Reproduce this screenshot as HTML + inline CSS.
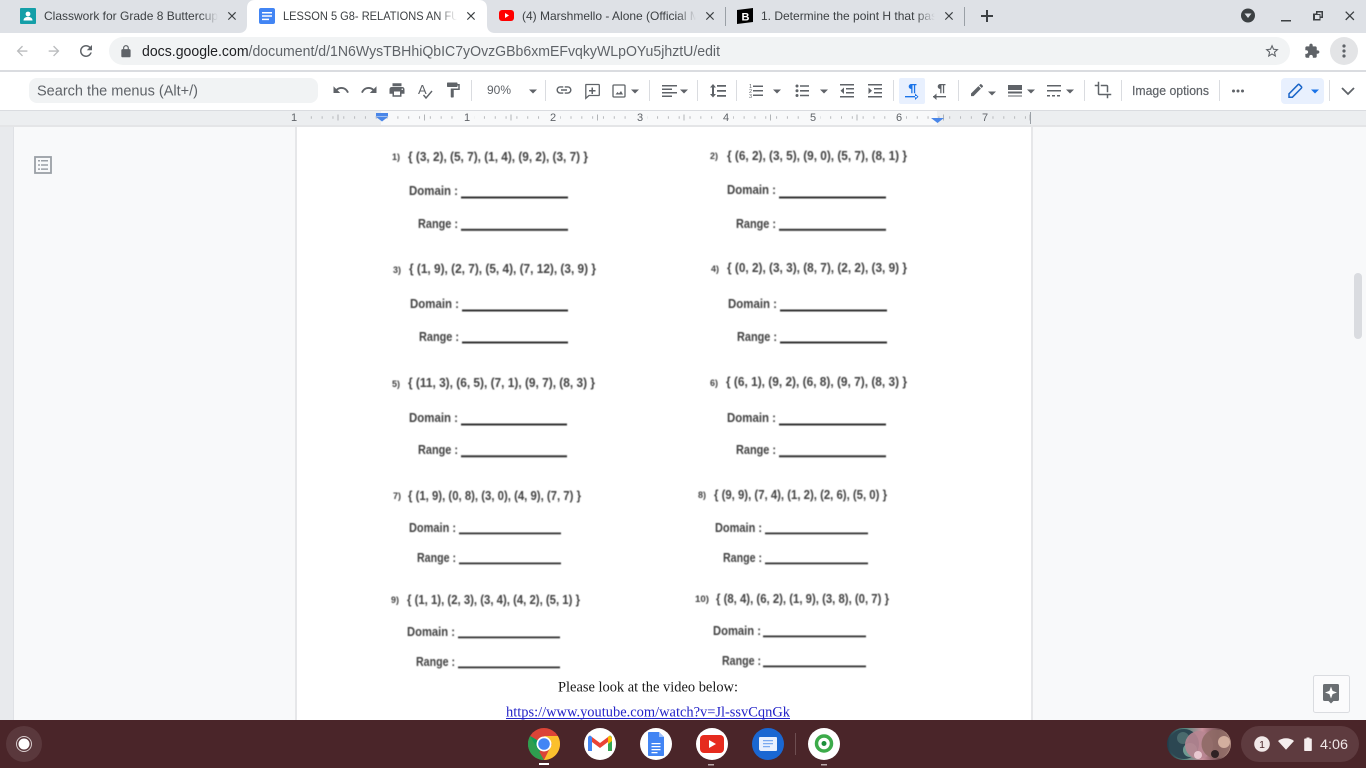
<!DOCTYPE html>
<html lang="en">
<head>
<meta charset="utf-8">
<title>LESSON 5 G8- RELATIONS AN FUNCTIONS</title>
<style>
html,body{margin:0;padding:0;width:1366px;height:768px;overflow:hidden;background:#fff}
svg{display:block;position:absolute;left:0;top:0}
text{font-family:"Liberation Sans",sans-serif}
.tab{font-size:12px}
.s{font-size:12.5px;font-weight:700;fill:#404040}
.l{font-size:9px;font-weight:700;fill:#404040}
.d{font-size:13px;font-weight:700;fill:#404040}
.u{fill:#333}
.r{font-size:11px;fill:#5f6368;text-anchor:middle}
.i{fill:#5f6368}
.sep{stroke:#dadce0;stroke-width:1}
</style>
</head>
<body>
<svg width="1366" height="768" viewBox="0 0 1366 768" xmlns="http://www.w3.org/2000/svg">
<defs>
<filter id="b" x="-5%" y="-5%" width="110%" height="110%"><feGaussianBlur stdDeviation="0.45"/></filter>
<linearGradient id="f1" gradientUnits="userSpaceOnUse" x1="200" x2="218" y1="0" y2="0"><stop offset="0" stop-color="#3c4043"/><stop offset="1" stop-color="#3c4043" stop-opacity="0"/></linearGradient>
<linearGradient id="f2" gradientUnits="userSpaceOnUse" x1="438" x2="457" y1="0" y2="0"><stop offset="0" stop-color="#3c4043"/><stop offset="1" stop-color="#3c4043" stop-opacity="0"/></linearGradient>
<linearGradient id="f3" gradientUnits="userSpaceOnUse" x1="677" x2="696" y1="0" y2="0"><stop offset="0" stop-color="#3c4043"/><stop offset="1" stop-color="#3c4043" stop-opacity="0"/></linearGradient>
<linearGradient id="f4" gradientUnits="userSpaceOnUse" x1="916" x2="935" y1="0" y2="0"><stop offset="0" stop-color="#3c4043"/><stop offset="1" stop-color="#3c4043" stop-opacity="0"/></linearGradient>
<linearGradient id="av" x1="0" x2="1" y1="0" y2="0"><stop offset="0" stop-color="#1f3b4a"/><stop offset=".3" stop-color="#5b8a80"/><stop offset=".55" stop-color="#c9909c"/><stop offset=".8" stop-color="#6d4a4e"/><stop offset="1" stop-color="#c9a596"/></linearGradient>
<clipPath id="pg"><rect x="297" y="125" width="734" height="595"/></clipPath>
</defs>

<!-- backgrounds -->
<rect width="1366" height="768" fill="#f8f9fa"/>
<rect x="0" y="125" width="13" height="595" fill="#e8eaed"/>
<rect x="13" y="125" width="1" height="595" fill="#dfe1e5"/>
<rect x="297" y="125" width="734" height="595" fill="#fff"/>
<rect x="295" y="125" width="2" height="595" fill="#e6e7e9"/>
<rect x="1031" y="125" width="2" height="595" fill="#e6e7e9"/>

<!-- tab strip -->
<rect width="1366" height="33" fill="#dee1e6"/>
<path d="M239 33c5 0 8-3 8-8V8c0-5 3-8 8-8h224c5 0 8 3 8 8v17c0 5 3 8 8 8z" fill="#fff"/>
<rect x="725" y="7" width="1" height="19" fill="#9aa0a6"/>
<rect x="964" y="7" width="1" height="19" fill="#9aa0a6"/>

<!-- tab 1 -->
<rect x="20" y="8" width="16" height="16" rx="1" fill="#149fa8"/>
<circle cx="28" cy="14" r="2.4" fill="#fff"/><path d="M23.5 20.5c0-2.4 2.2-3.6 4.5-3.6s4.500 1.200 4.500 3.600z" fill="#fff"/>
<text x="44" y="20" class="tab" fill="url(#f1)">Classwork for Grade 8 Buttercup Section</text>
<path transform="translate(225 9) scale(.58)" d="M19 6.410L17.590 5 12 10.590 6.410 5 5 6.410 10.590 12 5 17.590 6.410 19 12 13.410 17.590 19 19 17.590 13.410 12z" fill="#3c4043"/>
<!-- tab 2 -->
<rect x="259" y="8" width="16" height="16" rx="2" fill="#4285f4"/>
<path d="M262 12h10v1.500h-10zM262 15.300h10v1.500h-10zM262 18.600h7v1.500h-7z" fill="#fff"/>
<text x="283" y="20" class="tab" fill="url(#f2)" textLength="226" lengthAdjust="spacingAndGlyphs">LESSON 5 G8- RELATIONS AN FUNCTIONS</text>
<path transform="translate(464 9) scale(.58)" d="M19 6.410L17.590 5 12 10.590 6.410 5 5 6.410 10.590 12 5 17.590 6.410 19 12 13.410 17.590 19 19 17.590 13.410 12z" fill="#3c4043"/>
<!-- tab 3 -->
<rect x="499" y="10" width="15" height="11" rx="3" fill="#f00"/><path d="M505 13v5l4-2.500z" fill="#fff"/>
<text x="522" y="20" class="tab" fill="url(#f3)">(4) Marshmello - Alone (Official Music Video)</text>
<path transform="translate(703 9) scale(.58)" d="M19 6.410L17.590 5 12 10.590 6.410 5 5 6.410 10.590 12 5 17.590 6.410 19 12 13.410 17.590 19 19 17.590 13.410 12z" fill="#3c4043"/>
<!-- tab 4 -->
<path d="M737 10l16-2v14l-16 2z" fill="#000"/>
<text x="741.500" y="20.500" font-size="11" font-weight="700" fill="#fff">B</text>
<text x="761" y="20" class="tab" fill="url(#f4)">1. Determine the point H that passes through</text>
<path transform="translate(942 9) scale(.58)" d="M19 6.410L17.590 5 12 10.590 6.410 5 5 6.410 10.590 12 5 17.590 6.410 19 12 13.410 17.590 19 19 17.590 13.410 12z" fill="#3c4043"/>
<!-- new tab -->
<path d="M986 10h2v5h5v2h-5v5h-2v-5h-5v-2h5z" fill="#3c4043"/>
<!-- window controls -->
<circle cx="1248" cy="15.500" r="7" fill="#3c4043"/><path d="M1244.500 13.500h7l-3.500 4.500z" fill="#dee1e6"/>
<rect x="1281" y="20" width="10" height="1.500" fill="#3c4043"/>
<path d="M1316 11h7v7h-2.500v2.500h-7.500v-7h3zM1317.500 12.500v1.500h3v2.500h1v-4z M1315 15v4h4.500v-4z" fill="#3c4043" fill-rule="evenodd"/>
<path transform="translate(1342 8) scale(.65)" d="M19 6.410L17.590 5 12 10.590 6.410 5 5 6.410 10.590 12 5 17.590 6.410 19 12 13.410 17.590 19 19 17.590 13.410 12z" fill="#3c4043"/>

<!-- address row -->
<rect y="33" width="1366" height="38" fill="#fff"/>
<rect y="70" width="1366" height="2" fill="#dadce0"/>
<rect x="109" y="37" width="1181" height="28" rx="14" fill="#f1f3f4"/>
<path transform="translate(14 43) scale(.67)" d="M20 11H7.830l5.590-5.590L12 4l-8 8 8 8 1.410-1.410L7.830 13H20v-2z" fill="#babcbe"/>
<path transform="translate(46 43) scale(.67)" d="M12 4l-1.410 1.410L16.170 11H4v2h12.170l-5.580 5.590L12 20l8-8z" fill="#babcbe"/>
<path transform="translate(77 42) scale(.75)" d="M17.650 6.350C16.200 4.900 14.210 4 12 4c-4.420 0-7.990 3.580-7.990 8s3.570 8 7.990 8c3.730 0 6.840-2.550 7.730-6h-2.080c-.82 2.330-3.040 4-5.650 4-3.310 0-6-2.690-6-6s2.690-6 6-6c1.660 0 3.140.69 4.220 1.780L13 11h7V4l-2.350 2.350z" fill="#5f6368"/>
<path transform="translate(119 44.500) scale(.58)" d="M18 8h-1V6c0-2.760-2.240-5-5-5S7 3.240 7 6v2H6c-1.100 0-2 .9-2 2v10c0 1.100.9 2 2 2h12c1.100 0 2-.9 2-2V10c0-1.100-.9-2-2-2zM9 8V6c0-1.660 1.340-3 3-3s3 1.340 3 3v2z" fill="#5f6368"/>
<text x="142" y="56" font-size="14.500" textLength="578" lengthAdjust="spacingAndGlyphs" fill="#5f6368"><tspan fill="#202124">docs.google.com</tspan>/document/d/1N6WysTBHhiQbIC7yOvzGBb6xmEFvqkyWLpOYu5jhztU/edit</text>
<path transform="translate(1264 43) scale(.67)" d="M22 9.240l-7.190-.62L12 2 9.190 8.630 2 9.240l5.460 4.730L5.820 21 12 17.270 18.180 21l-1.630-7.030L22 9.240zM12 15.400l-3.760 2.270 1-4.280-3.320-2.880 4.380-.38L12 6.100l1.710 4.040 4.380.38-3.320 2.880 1 4.280L12 15.400z" fill="#5f6368"/>
<path transform="translate(1304 43) scale(.67)" d="M20.500 11H19V7c0-1.100-.9-2-2-2h-4V3.500C13 2.120 11.880 1 10.500 1S8 2.120 8 3.500V5H4c-1.100 0-1.990.9-1.990 2v3.800H3.500c1.490 0 2.700 1.210 2.700 2.700s-1.210 2.700-2.700 2.700H2V20c0 1.100.9 2 2 2h3.800v-1.500c0-1.490 1.210-2.700 2.700-2.700 1.490 0 2.700 1.210 2.700 2.700V22H17c1.100 0 2-.9 2-2v-4h1.500c1.380 0 2.500-1.120 2.500-2.500S21.880 11 20.500 11z" fill="#5f6368"/>
<circle cx="1344" cy="51" r="14" fill="#e3e4e6"/>
<circle cx="1344" cy="46" r="1.600" fill="#5f6368"/><circle cx="1344" cy="51" r="1.600" fill="#5f6368"/><circle cx="1344" cy="56" r="1.600" fill="#5f6368"/>

<!-- docs toolbar -->
<rect y="72" width="1366" height="38" fill="#fff"/>
<rect x="29" y="78" width="289" height="25" rx="8" fill="#f1f3f4"/>
<text x="37" y="95.500" font-size="15" fill="#5f6368" textLength="161" lengthAdjust="spacingAndGlyphs">Search the menus (Alt+/)</text>

<g class="i">
<path transform="translate(332 81) scale(.75)" d="M12.500 8c-2.650 0-5.050.99-6.900 2.600L2 7v9h9l-3.620-3.620c1.390-1.160 3.160-1.880 5.120-1.880 3.540 0 6.550 2.310 7.600 5.500l2.370-.78C21.080 11.030 17.150 8 12.500 8z"/>
<path transform="translate(360 81) scale(.75)" d="M18.400 10.600C16.550 8.990 14.150 8 11.500 8c-4.650 0-8.580 3.030-9.960 7.220L3.900 16c1.050-3.190 4.050-5.500 7.600-5.500 1.950 0 3.730.72 5.120 1.880L13 16h9V7l-3.600 3.600z"/>
<path transform="translate(388 81) scale(.75)" d="M19 8H5c-1.660 0-3 1.340-3 3v6h4v4h12v-4h4v-6c0-1.660-1.340-3-3-3zm-3 11H8v-5h8v5zm3-7c-.55 0-1-.45-1-1s.45-1 1-1 1 .45 1 1-.45 1-1 1zm-1-9H6v4h12V3z"/>
<text x="418" y="94" font-size="13" fill="#5f6368">A</text>
<path d="M423.500 95l2.500 3 6-7" fill="none" stroke="#5f6368" stroke-width="1.400"/>
<path transform="translate(444 81) scale(.75)" d="M18 4V3c0-.55-.45-1-1-1H5c-.55 0-1 .45-1 1v4c0 .55.45 1 1 1h12c.55 0 1-.45 1-1V6h1v4H9v11c0 .55.45 1 1 1h2c.55 0 1-.45 1-1v-9h8V4h-3z"/>
<path transform="translate(555 81) scale(.75)" d="M3.900 12c0-1.710 1.390-3.100 3.100-3.100h4V7H7c-2.760 0-5 2.240-5 5s2.240 5 5 5h4v-1.900H7c-1.710 0-3.100-1.390-3.100-3.100zM8 13h8v-2H8v2zm9-6h-4v1.900h4c1.710 0 3.100 1.390 3.100 3.100s-1.390 3.100-3.100 3.100h-4V17h4c2.760 0 5-2.240 5-5s-2.240-5-5-5z"/>
<!-- comment -->
<path d="M586 84.500h12.500a.8.800 0 0 1 .8.800v9.400a.8.800 0 0 1-.8.800h-9.500l-3.200 2.800V85.300a.8.800 0 0 1 .2-.8z" fill="none" stroke="#5f6368" stroke-width="1.300"/>
<path d="M591.500 87.500h1.500v2.500h2.500v1.500h-2.500v2.500h-1.500v-2.500h-2.500v-1.500h2.500z"/>
<!-- image -->
<rect x="613" y="85" width="12" height="12" rx="1" fill="none" stroke="#5f6368" stroke-width="1.300"/>
<path d="M615.500 94.500l2-2.500 1.500 1.500 2-2.500 2 3.500z"/>
<!-- align -->
<path d="M662 85h15v1.500h-15zM662 88.500h10v1.500h-10zM662 92h15v1.500h-15zM662 95.500h10v1.500h-10z"/>
<!-- line spacing -->
<path d="M713 84l3 3.500h-2v6.500h2l-3 3.500-3-3.500h2v-6.500h-2z"/>
<path d="M717 85h9v1.800h-9zM717 90h9v1.800h-9zM717 95h9v1.800h-9z"/>
<!-- numbered list -->
<path d="M753 85.500h10v1.500h-10zM753 90h10v1.500h-10zM753 94.500h10v1.500h-10z"/>
<text x="749" y="88" font-size="5.500">1</text><text x="749" y="93" font-size="5.500">2</text><text x="749" y="98" font-size="5.500">3</text>
<!-- bullet list -->
<circle cx="797" cy="86" r="1.500"/><circle cx="797" cy="90.800" r="1.500"/><circle cx="797" cy="95.500" r="1.500"/>
<path d="M800 85.200h9v1.600h-9zM800 90h9v1.600h-9zM800 94.700h9v1.600h-9z"/>
<!-- indent decrease -->
<path d="M840 84h14v1.500h-14zM846 88h8v1.500h-8zM846 92h8v1.500h-8zM840 96h14v1.500h-14zM844 87.500v6.500l-3.500-3.250z"/>
<!-- indent increase -->
<path d="M868 84h14v1.500h-14zM874 88h8v1.500h-8zM874 92h8v1.500h-8zM868 96h14v1.500h-14zM868.500 87.500v6.500l3.500-3.250z"/>
<!-- rtl -->
<path d="M936.500 84h9v1.300h-1.300v8h-1.300v-8h-1.400v8h-1.300v-4.300a2.500 2.500 0 0 1 0-5z"/>
<path d="M933 96h13v1.400h-13zM936.500 93.500v6.500l-3.500-3.250z"/>
<!-- pencil -->
<path transform="translate(969 82) scale(.67)" d="M3 17.250V21h3.750L17.810 9.940l-3.750-3.750L3 17.250zM20.710 7.040c.39-.39.39-1.020 0-1.410l-2.340-2.340c-.39-.39-1.020-.39-1.410 0l-1.830 1.830 3.750 3.750 1.830-1.830z"/>
<!-- border weight / dash -->
<path d="M1008 85h14v5h-14zM1008 91.500h14v2h-14zM1008 95.500h14v1h-14z"/>
<path d="M1047 85h14v1.500h-14zM1047 90h14v1.500h-14zM1047 95h3v1.500h-3zM1052 95h3v1.500h-3zM1057 95h3v1.500h-3z"/>
<!-- crop -->
<path transform="translate(1094 81) scale(.75)" d="M17 15h2V7c0-1.100-.9-2-2-2H9v2h8v8zM7 17V1H5v4H1v2h4v10c0 1.100.9 2 2 2h10v4h2v-4h4v-2H7z"/>
<!-- dots -->
<circle cx="1233.500" cy="91" r="1.500"/><circle cx="1238" cy="91" r="1.500"/><circle cx="1242.500" cy="91" r="1.500"/>
<!-- small arrows -->
<path d="M529 89.500h8l-4 4zM631 89.500h8l-4 4zM680 89.500h8l-4 4zM773 89.500h8l-4 4zM820 89.500h8l-4 4zM988 91.500h8l-4 4zM1027 89.500h8l-4 4zM1066 89.500h8l-4 4z"/>
</g>
<text x="487" y="94" font-size="12" fill="#5f6368">90%</text>
<text x="1132" y="95" font-size="12.500" font-weight="400" fill="#5f6368" stroke="#5f6368" stroke-width=".2" textLength="77" lengthAdjust="spacingAndGlyphs">Image options</text>
<!-- LTR highlighted -->
<rect x="899" y="78" width="26" height="26" rx="2" fill="#e8f0fe"/>
<path d="M907.500 84h9v1.300h-1.300v8h-1.300v-8h-1.400v8h-1.300v-4.300a2.500 2.500 0 0 1 0-5z" fill="#1a73e8"/>
<path d="M905 96h12v1.400h-12zM915 93.500v6.500l3.500-3.250z" fill="#1a73e8"/>
<!-- edit mode -->
<rect x="1281" y="78" width="43" height="26" rx="4" fill="#e8f0fe"/>
<path d="M1289 97.200v-3.400l9-9.100c.4-.4 1-.4 1.400 0l2 2c.4.4.4 1 0 1.400l-9 9.100z" fill="none" stroke="#1a65c8" stroke-width="1.500"/>
<path d="M1311 89.500h8l-4 4z" fill="#1a73e8"/>
<path d="M1342 88l6 6 6-6" fill="none" stroke="#5f6368" stroke-width="1.800"/>
<!-- separators -->
<g class="sep">
<path d="M471.500 80v21M545.500 80v21M649.500 80v21M697.500 80v21M736.500 80v21M893.500 80v21M958.500 80v21M1084.500 80v21M1121.500 80v21M1219.500 80v21M1329.500 80v21"/>
</g>

<!-- ruler -->
<rect y="110" width="1366" height="15" fill="#eceef0"/>
<rect y="110" width="1366" height="1" fill="#dadce0"/>
<rect x="381" y="111" width="556" height="14" fill="#f8f9fa"/>
<rect y="125" width="1366" height="2" fill="#e4e5e7"/>
<line x1="300" x2="1031" y1="117.500" y2="117.500" stroke="#b8babd" stroke-width="2.500" stroke-dasharray="1 9.820"/>
<line x1="337.500" x2="1031" y1="117.500" y2="117.500" stroke="#b0b3b6" stroke-width="6" stroke-dasharray="1 85.500"/>
<rect x="1030" y="112" width="1" height="12" fill="#9aa0a6"/>
<rect x="285" y="111" width="18" height="13" fill="#eceef0"/>
<rect x="460" y="111" width="14" height="13" fill="#f8f9fa"/><rect x="546" y="111" width="14" height="13" fill="#f8f9fa"/><rect x="633" y="111" width="14" height="13" fill="#f8f9fa"/><rect x="719" y="111" width="14" height="13" fill="#f8f9fa"/><rect x="806" y="111" width="14" height="13" fill="#f8f9fa"/><rect x="892" y="111" width="14" height="13" fill="#f8f9fa"/><rect x="978" y="111" width="14" height="13" fill="#eceef0"/>
<text x="294" y="121" class="r">1</text><text x="467" y="121" class="r">1</text><text x="553" y="121" class="r">2</text><text x="640" y="121" class="r">3</text><text x="726" y="121" class="r">4</text><text x="813" y="121" class="r">5</text><text x="899" y="121" class="r">6</text><text x="985" y="121" class="r">7</text>
<rect x="376" y="113" width="12" height="3" fill="#4a86e8"/>
<path d="M375.500 116.500h13l-6.500 5z" fill="#4a86e8"/>
<path d="M931 118h13l-6.500 5z" fill="#4a86e8"/>

<!-- outline icon -->
<rect x="35" y="157" width="16" height="16" fill="none" stroke="#9aa0a6" stroke-width="1.800"/>
<path d="M38 160h2v1.500h-2zM41 160h7v1.500h-7zM38 164.200h2v1.500h-2zM41 164.200h7v1.500h-7zM38 168.400h2v1.500h-2zM41 168.400h7v1.500h-7z" fill="#9aa0a6"/>

<!-- worksheet image -->
<g filter="url(#b)" clip-path="url(#pg)">
<text x="392" y="160" class="l">1)</text><text x="408" y="161" class="s" textLength="180" lengthAdjust="spacingAndGlyphs">{ (3, 2), (5, 7), (1, 4), (9, 2), (3, 7) }</text>
<text x="409" y="195" class="d" textLength="49" lengthAdjust="spacingAndGlyphs">Domain :</text><rect x="461" y="196.500" width="107" height="2" class="u"/>
<text x="418" y="228" class="d" textLength="40" lengthAdjust="spacingAndGlyphs">Range :</text><rect x="461" y="228.800" width="107" height="2" class="u"/>

<text x="710" y="159" class="l">2)</text><text x="727" y="160" class="s" textLength="180" lengthAdjust="spacingAndGlyphs">{ (6, 2), (3, 5), (9, 0), (5, 7), (8, 1) }</text>
<text x="727" y="194" class="d" textLength="49" lengthAdjust="spacingAndGlyphs">Domain :</text><rect x="779" y="196.500" width="107" height="2" class="u"/>
<text x="736" y="228" class="d" textLength="40" lengthAdjust="spacingAndGlyphs">Range :</text><rect x="779" y="228.800" width="107" height="2" class="u"/>

<text x="393" y="273" class="l">3)</text><text x="409" y="273" class="s" textLength="187" lengthAdjust="spacingAndGlyphs">{ (1, 9), (2, 7), (5, 4), (7, 12), (3, 9) }</text>
<text x="410" y="308" class="d" textLength="49" lengthAdjust="spacingAndGlyphs">Domain :</text><rect x="462" y="309.500" width="106" height="2" class="u"/>
<text x="419" y="341" class="d" textLength="40" lengthAdjust="spacingAndGlyphs">Range :</text><rect x="462" y="341.500" width="106" height="2" class="u"/>

<text x="711" y="272" class="l">4)</text><text x="727" y="272" class="s" textLength="180" lengthAdjust="spacingAndGlyphs">{ (0, 2), (3, 3), (8, 7), (2, 2), (3, 9) }</text>
<text x="728" y="308" class="d" textLength="49" lengthAdjust="spacingAndGlyphs">Domain :</text><rect x="780" y="309.500" width="107" height="2" class="u"/>
<text x="737" y="341" class="d" textLength="40" lengthAdjust="spacingAndGlyphs">Range :</text><rect x="780" y="341.500" width="107" height="2" class="u"/>

<text x="392" y="387" class="l">5)</text><text x="408" y="387" class="s" textLength="187" lengthAdjust="spacingAndGlyphs">{ (11, 3), (6, 5), (7, 1), (9, 7), (8, 3) }</text>
<text x="409" y="422" class="d" textLength="49" lengthAdjust="spacingAndGlyphs">Domain :</text><rect x="461" y="423.500" width="106" height="2" class="u"/>
<text x="418" y="454" class="d" textLength="40" lengthAdjust="spacingAndGlyphs">Range :</text><rect x="461" y="455.300" width="106" height="2" class="u"/>

<text x="710" y="386" class="l">6)</text><text x="726" y="386" class="s" textLength="181" lengthAdjust="spacingAndGlyphs">{ (6, 1), (9, 2), (6, 8), (9, 7), (8, 3) }</text>
<text x="727" y="422" class="d" textLength="49" lengthAdjust="spacingAndGlyphs">Domain :</text><rect x="779" y="423.500" width="107" height="2" class="u"/>
<text x="736" y="454" class="d" textLength="40" lengthAdjust="spacingAndGlyphs">Range :</text><rect x="779" y="455.300" width="107" height="2" class="u"/>

<text x="393" y="499" class="l">7)</text><text x="408" y="500" class="s" textLength="173" lengthAdjust="spacingAndGlyphs">{ (1, 9), (0, 8), (3, 0), (4, 9), (7, 7) }</text>
<text x="409" y="532" class="d" textLength="47" lengthAdjust="spacingAndGlyphs">Domain :</text><rect x="459" y="532.500" width="102" height="1.800" class="u"/>
<text x="417" y="562" class="d" textLength="39" lengthAdjust="spacingAndGlyphs">Range :</text><rect x="459" y="562.500" width="102" height="1.800" class="u"/>

<text x="698" y="498" class="l">8)</text><text x="714" y="499" class="s" textLength="173" lengthAdjust="spacingAndGlyphs">{ (9, 9), (7, 4), (1, 2), (2, 6), (5, 0) }</text>
<text x="715" y="532" class="d" textLength="47" lengthAdjust="spacingAndGlyphs">Domain :</text><rect x="765" y="532.500" width="103" height="1.800" class="u"/>
<text x="723" y="562" class="d" textLength="39" lengthAdjust="spacingAndGlyphs">Range :</text><rect x="765" y="562.500" width="103" height="1.800" class="u"/>

<text x="391" y="603" class="l">9)</text><text x="407" y="604" class="s" textLength="173" lengthAdjust="spacingAndGlyphs">{ (1, 1), (2, 3), (3, 4), (4, 2), (5, 1) }</text>
<text x="407" y="636" class="d" textLength="48" lengthAdjust="spacingAndGlyphs">Domain :</text><rect x="458" y="636.500" width="102" height="1.800" class="u"/>
<text x="416" y="666" class="d" textLength="39" lengthAdjust="spacingAndGlyphs">Range :</text><rect x="458" y="666.500" width="102" height="1.800" class="u"/>

<text x="695" y="602" class="l" textLength="14" lengthAdjust="spacingAndGlyphs">10)</text><text x="716" y="603" class="s" textLength="173" lengthAdjust="spacingAndGlyphs">{ (8, 4), (6, 2), (1, 9), (3, 8), (0, 7) }</text>
<text x="713" y="635" class="d" textLength="48" lengthAdjust="spacingAndGlyphs">Domain :</text><rect x="763" y="635.500" width="103" height="1.800" class="u"/>
<text x="722" y="665" class="d" textLength="39" lengthAdjust="spacingAndGlyphs">Range :</text><rect x="763" y="665.500" width="103" height="1.800" class="u"/>
</g>

<!-- doc text -->
<text x="558" y="691.500" font-size="14.500" style="font-family:'Liberation Serif',serif" fill="#1a1a1a" textLength="180" lengthAdjust="spacingAndGlyphs">Please look at the video below:</text>
<text x="506" y="716.500" font-size="14.500" style="font-family:'Liberation Serif',serif" fill="#2323c8" textLength="284" lengthAdjust="spacingAndGlyphs">https://www.youtube.com/watch?v=Jl-ssvCqnGk</text>
<rect x="506" y="718" width="284" height="1" fill="#2323c8"/>

<!-- scrollbar -->
<rect x="1354" y="273" width="8" height="66" rx="4" fill="#dadce0"/>
<!-- explore button -->
<rect x="1313.500" y="675.500" width="36" height="37" rx="2" fill="#fbfbfc" stroke="#dadce0"/>
<path d="M1323 685.500a1.500 1.500 0 0 1 1.500-1.500h13a1.500 1.500 0 0 1 1.500 1.500v14a1.500 1.500 0 0 1-1.500 1.500h-4l-2.500 2.500-2.500-2.500h-4a1.500 1.500 0 0 1-1.500-1.500z" fill="#6a6e72"/>
<path d="M1331 686.500l1.600 4.400 4.400 1.600-4.400 1.600-1.600 4.400-1.600-4.400-4.400-1.600 4.400-1.600z" fill="#fff"/>

<!-- shelf -->
<rect y="720" width="1366" height="48" fill="#4a2529"/>
<circle cx="24" cy="744" r="18" fill="#5a383c"/>
<circle cx="24" cy="744" r="7.500" fill="none" stroke="#d8cccd" stroke-width="1"/>
<circle cx="24" cy="744" r="5.500" fill="#fff"/>

<!-- chrome -->
<circle cx="544" cy="744" r="16" fill="#db4437"/>
<path d="M544 744l-8 13.860A16 16 0 0 1 530.140 736z" fill="#0f9d58"/>
<path d="M544 736h13.860A16 16 0 0 1 544 760l8-16z" fill="#fbc02d"/>
<path d="M544 760a16 16 0 0 1-13.860-24l8 13.860z" fill="#2e9e4f"/>
<circle cx="544" cy="744" r="7.500" fill="#fff"/><circle cx="544" cy="744" r="5.800" fill="#4285f4"/>
<rect x="539" y="763" width="10" height="2" fill="#fff"/>
<!-- gmail -->
<circle cx="600" cy="744" r="16" fill="#fff"/>
<path d="M588 738v13h4v-9l8 6 8-6v9h4v-13l-2-2.500-10 7.500-10-7.500z" fill="#ea4335"/>
<path d="M588 738a3 3 0 0 1 2-2.500l2 1.500v14h-3a1 1 0 0 1-1-1z" fill="#4285f4"/>
<path d="M612 738a3 3 0 0 0-2-2.500l-2 1.500v14h3a1 1 0 0 0 1-1z" fill="#34a853"/>
<path d="M608 737l2-1.500 2 2.500v3l-4 3z" fill="#fbbc04"/>
<!-- docs -->
<circle cx="656" cy="744" r="16" fill="#fff"/>
<path d="M649 732h10l5 5v18a1 1 0 0 1-1 1h-14a1 1 0 0 1-1-1v-22a1 1 0 0 1 1-1z" fill="#4285f4"/>
<path d="M659 732l5 5h-5z" fill="#a1c2fa"/>
<path d="M651.500 743h9v1.200h-9zM651.500 746h9v1.200h-9zM651.500 749h9v1.200h-9zM651.500 752h6v1.200h-6z" fill="#fff"/>
<!-- youtube -->
<circle cx="712" cy="744" r="16" fill="#fff"/>
<rect x="700" y="735" width="24" height="18" rx="4" fill="#e62b1e"/>
<path d="M709 740v8l7-4z" fill="#fff"/>
<rect x="708" y="764" width="6" height="1.500" fill="#b9a8a9"/>
<!-- messages -->
<circle cx="768" cy="744" r="16" fill="#1a67d2"/>
<path d="M760 737h16a1 1 0 0 1 1 1v12a1 1 0 0 1-1 1h-12l-3 0c-.8 0-2-1-2-2v-11a1 1 0 0 1 1-1z" fill="#e8f0fe"/>
<path d="M763 740h10v1.300h-10zM763 743h10v1.300h-10zM763 746h7v1.300h-7z" fill="#7baaf0"/>
<rect x="795" y="733" width="1" height="22" fill="#6e4e51"/>
<!-- green app -->
<circle cx="824" cy="744" r="16" fill="#fff"/>
<circle cx="824" cy="743.500" r="7.500" fill="none" stroke="#3cab4a" stroke-width="3.500"/>
<circle cx="824" cy="743.500" r="2.500" fill="#1c8f3a"/>
<rect x="821" y="764" width="6" height="1.500" fill="#b9a8a9"/>
<!-- avatars -->
<rect x="1167" y="728" width="64" height="32" rx="16" fill="url(#av)"/>
<circle cx="1184" cy="744" r="15" fill="#2c4752"/><circle cx="1190" cy="750" r="7" fill="#7fb0a2" opacity=".8"/><circle cx="1183" cy="738" r="6" fill="#4a6a6d"/>
<circle cx="1199" cy="745" r="14" fill="#b88692" opacity=".9"/><circle cx="1198" cy="755" r="4" fill="#e8c8d0"/>
<circle cx="1216" cy="744" r="14.500" fill="#8f6a66" opacity=".9"/><circle cx="1224" cy="742" r="6" fill="#d2ae9e"/><circle cx="1215" cy="754" r="4" fill="#2e2224"/>
<!-- tray -->
<rect x="1241" y="726" width="118" height="36" rx="18" fill="#5e3b3f"/>
<circle cx="1262" cy="744" r="7.800" fill="#f1e8e8"/>
<text x="1262" y="748" font-size="10.500" text-anchor="middle" fill="#4a2529">1</text>
<path d="M1278 741c2.200-1.700 5-2.700 8-2.700s5.800 1 8 2.700l-8 8.800z" fill="#f5eeee"/>
<path d="M1306.500 737.500h3v1h1.500a.8.800 0 0 1 .8.800v10.900a.8.800 0 0 1-.8.800h-6a.8.800 0 0 1-.8-.8v-10.900a.8.800 0 0 1 .8-.8h1.500z" fill="#f5eeee"/>
<text x="1320" y="749" font-size="13.500" fill="#f1e8e8" textLength="28" lengthAdjust="spacingAndGlyphs">4:06</text>
</svg>
</body>
</html>
